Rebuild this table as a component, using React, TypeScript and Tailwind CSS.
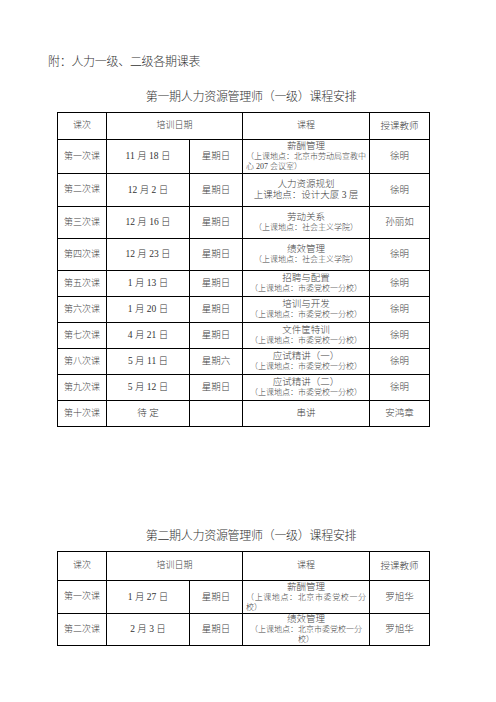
import React from "react";

type Row = {
  no: string;
  date: string;
  day: string;
  course: string;
  place?: string[];
  placeStyle?: "small" | "big" | "justify";
  teacher: string;
  h: string;
};

const TERM_ONE: Row[] = [
  {
    no: "第一次课",
    date: "11 月 18 日",
    day: "星期日",
    course: "薪酬管理",
    place: ["（上课地点：北京市劳动局宣教中", "心 207 会议室）"],
    placeStyle: "justify",
    teacher: "徐明",
    h: "h-[34px]",
  },
  {
    no: "第二次课",
    date: "12 月 2 日",
    day: "星期日",
    course: "人力资源规划",
    place: ["上课地点：设计大厦 3 层"],
    placeStyle: "big",
    teacher: "徐明",
    h: "h-[33px]",
  },
  {
    no: "第三次课",
    date: "12 月 16 日",
    day: "星期日",
    course: "劳动关系",
    place: ["（上课地点：社会主义学院）"],
    teacher: "孙丽如",
    h: "h-[32px]",
  },
  {
    no: "第四次课",
    date: "12 月 23 日",
    day: "星期日",
    course: "绩效管理",
    place: ["（上课地点：社会主义学院）"],
    teacher: "徐明",
    h: "h-[32px]",
  },
  {
    no: "第五次课",
    date: "1 月 13 日",
    day: "星期日",
    course: "招聘与配置",
    place: ["（上课地点：市委党校一分校）"],
    teacher: "徐明",
    h: "h-[26px]",
  },
  {
    no: "第六次课",
    date: "1 月 20 日",
    day: "星期日",
    course: "培训与开发",
    place: ["（上课地点：市委党校一分校）"],
    teacher: "徐明",
    h: "h-[26px]",
  },
  {
    no: "第七次课",
    date: "4 月 21 日",
    day: "星期日",
    course: "文件筐特训",
    place: ["（上课地点：市委党校一分校）"],
    teacher: "徐明",
    h: "h-[26px]",
  },
  {
    no: "第八次课",
    date: "5 月 11 日",
    day: "星期六",
    course: "应试精讲（一）",
    place: ["（上课地点：市委党校一分校）"],
    teacher: "徐明",
    h: "h-[26px]",
  },
  {
    no: "第九次课",
    date: "5 月 12 日",
    day: "星期日",
    course: "应试精讲（二）",
    place: ["（上课地点：市委党校一分校）"],
    teacher: "徐明",
    h: "h-[26px]",
  },
  {
    no: "第十次课",
    date: "待 定",
    day: "",
    course: "串讲",
    teacher: "安鸿章",
    h: "h-[26px]",
  },
];

const TERM_TWO: Row[] = [
  {
    no: "第一次课",
    date: "1 月 27 日",
    day: "星期日",
    course: "薪酬管理",
    place: ["（上课地点：北京市委党校一分", "校）"],
    placeStyle: "justify",
    teacher: "罗旭华",
    h: "h-[33px]",
  },
  {
    no: "第二次课",
    date: "2 月 3 日",
    day: "星期日",
    course: "绩效管理",
    place: ["（上课地点：北京市委党校一分", "校）"],
    teacher: "罗旭华",
    h: "h-[32px]",
  },
];

const cell = "border border-black text-center align-middle p-0";

function CourseCell({ row }: { row: Row }) {
  const lines = row.place ?? [];
  return (
    <td className={`${cell} px-[3px]`}>
      <div className={row.place ? "text-[9.5px] leading-[11px]" : "text-[9.5px]"}>
        {row.course}
      </div>
      {row.placeStyle === "justify" ? (
        <div className="text-[8px] leading-[10px]">
          <div className="text-justify [text-align-last:justify]">{lines[0]}</div>
          <div className="text-left">{lines[1]}</div>
        </div>
      ) : row.placeStyle === "big" ? (
        <div className="text-[9.5px] leading-[11px]">{lines[0]}</div>
      ) : (
        lines.map((l) => (
          <div key={l} className="text-[8px] leading-[10px]">
            {l}
          </div>
        ))
      )}
    </td>
  );
}

function Schedule({ title, rows, headH }: { title: string; rows: Row[]; headH: string }) {
  return (
    <section>
      <h2 className="text-[12px] leading-[14px] text-center text-[#333] tracking-[-0.3px] pl-[6px]">
        {title}
      </h2>
      <table className="mt-[8px] ml-[57px] w-[372px] border-collapse table-fixed text-[#444]">
        <colgroup>
          <col className="w-[49px]" />
          <col className="w-[83px]" />
          <col className="w-[53px]" />
          <col className="w-[127px]" />
          <col className="w-[60px]" />
        </colgroup>
        <tbody className="text-[9px]">
          <tr className={headH}>
            <td className={cell}>课次</td>
            <td className={cell} colSpan={2}>
              培训日期
            </td>
            <td className={cell}>课程</td>
            <td className={`${cell} text-[9.5px]`}>授课教师</td>
          </tr>
          {rows.map((r) => (
            <tr key={r.no} className={r.h}>
              <td className={cell}>{r.no}</td>
              <td className={`${cell} text-[9.5px] text-[#333]`}>{r.date}</td>
              <td className={`${cell} text-[9.5px]`}>{r.day}</td>
              <CourseCell row={r} />
              <td className={`${cell} text-[9.5px]`}>{r.teacher}</td>
            </tr>
          ))}
        </tbody>
      </table>
    </section>
  );
}

export default function App() {
  return (
    <div className="w-[496px] h-[702px] bg-white font-['Liberation_Serif','Noto_Sans_CJK_SC',serif] font-light text-[#333]">
      <p className="pt-[55px] pl-[48px] text-[12px] leading-[14px] tracking-[-0.3px]">
        附：人力一级、二级各期课表
      </p>
      <div className="mt-[21px]">
        <Schedule title="第一期人力资源管理师（一级）课程安排" rows={TERM_ONE} headH="h-[27px]" />
      </div>
      <div className="mt-[102px]">
        <Schedule title="第二期人力资源管理师（一级）课程安排" rows={TERM_TWO} headH="h-[29px]" />
      </div>
    </div>
  );
}
